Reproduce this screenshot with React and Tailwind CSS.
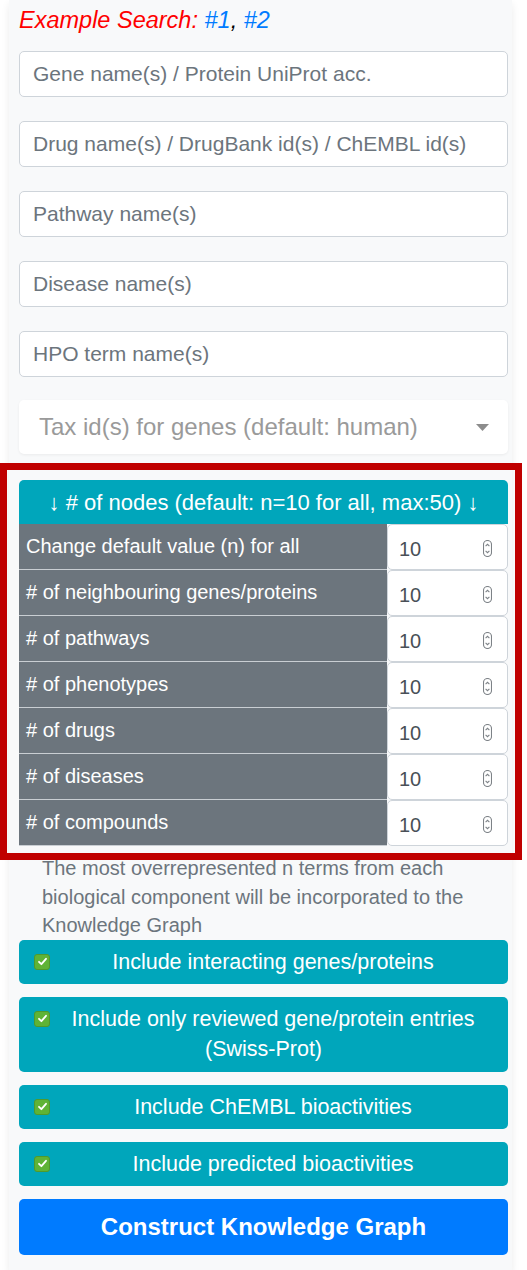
import React from "react";

const textInputs = [
  "Gene name(s) / Protein UniProt acc.",
  "Drug name(s) / DrugBank id(s) / ChEMBL id(s)",
  "Pathway name(s)",
  "Disease name(s)",
  "HPO term name(s)",
];

const nodeRows = [
  "Change default value (n) for all",
  "# of neighbouring genes/proteins",
  "# of pathways",
  "# of phenotypes",
  "# of drugs",
  "# of diseases",
  "# of compounds",
];

const options = [
  ["Include interacting genes/proteins"],
  ["Include only reviewed gene/protein entries", "(Swiss-Prot)"],
  ["Include ChEMBL bioactivities"],
  ["Include predicted bioactivities"],
];

function Spinner() {
  return (
    <svg width="9" height="17" viewBox="0 0 9 17" fill="none" stroke="#7d8287" strokeWidth="1.1">
      <rect x="0.5" y="0.5" width="8" height="16" rx="4" />
      <path d="M2.6 6.2 L4.5 4.3 L6.4 6.2" />
      <path d="M2.6 10.8 L4.5 12.7 L6.4 10.8" />
    </svg>
  );
}

function CheckBox() {
  return (
    <span className="float-left mt-[7px] ml-[3px] flex h-[16px] w-[16px] items-center justify-center rounded-[3px] border border-[#4f9a2c] bg-[#5fb336]">
      <svg width="11" height="11" viewBox="0 0 11 11" fill="none" stroke="white" strokeWidth="1.8" strokeLinecap="round" strokeLinejoin="round">
        <path d="M2 5.8 L4.4 8.2 L9 2.8" />
      </svg>
    </span>
  );
}

export default function App() {
  return (
    <div className="min-h-screen bg-white font-['Liberation_Sans',Arial,sans-serif]">
      <div className="ml-[9px] w-[503px] bg-[#f8f9fa] pl-[10px] pr-[4px] pt-[6px] pb-[16px] shadow-[0_4px_8px_rgba(0,0,0,0.08)]">
        <p className="text-[23.5px] leading-[28px] italic text-[#ff0000]">
          Example Search: <a className="text-[#007bff]">#1</a>
          <span className="text-black">,</span> <a className="text-[#007bff]">#2</a>
        </p>

        <div className="mt-[17px] flex flex-col gap-[24px]">
          {textInputs.map((p) => (
            <input
              key={p}
              placeholder={p}
              className="h-[46px] w-full rounded-[5px] border border-[#ced4da] bg-white px-[13px] text-[21px] text-[#495057] placeholder:text-[#6c757d] outline-none"
            />
          ))}
        </div>

        <div className="mt-[23px] flex h-[54px] items-center justify-between rounded-[5px] bg-white pl-[20px] pr-[19px] shadow-[0_1px_3px_rgba(0,0,0,0.06)]">
          <span className="text-[24px] text-[#9a9a9a]">Tax id(s) for genes (default: human)</span>
          <svg width="13" height="7" viewBox="0 0 13 7">
            <path d="M0 0 H13 L6.5 7 Z" fill="#8c8c8c" />
          </svg>
        </div>

        <div className="relative mt-[26px]">
          <div className="pointer-events-none absolute -top-[17px] -bottom-[14px] -left-[19px] -right-[14px] border-[7px] border-[#c00000]" />
          <div className="flex h-[44px] items-center justify-center rounded-t-[5px] bg-[#00a6bb] text-[22px] text-white">
            ↓ # of nodes (default: n=10 for all, max:50) ↓
          </div>
          {nodeRows.map((label) => (
            <div key={label} className="flex h-[46px]">
              <div className="flex w-[368px] items-center border-b border-[#c9ced3] bg-[#6c757d] pl-[7px] pb-[2px] text-[20px] text-white">
                {label}
              </div>
              <div className="flex flex-1 items-center justify-between rounded-[5px] border border-[#ced4da] bg-white pl-[11px] pr-[15px] pt-[3px]">
                <span className="text-[20px] text-[#495057]">10</span>
                <Spinner />
              </div>
            </div>
          ))}
        </div>

        <p className="mt-[8px] pl-[23px] pr-[26px] text-[20px] leading-[28.5px] text-[#6c757d]">
          The most overrepresented n terms from each biological component will be incorporated to the Knowledge Graph
        </p>

        <div className="flex flex-col gap-[13px]">
          {options.map((lines) => (
            <div
              key={lines[0]}
              className={
                lines.length > 1
                  ? "rounded-[5px] bg-[#00a6bb] px-[12px] pt-[7px] pb-[8px] text-center text-[21.5px] leading-[30px] text-white"
                  : "rounded-[5px] bg-[#00a6bb] px-[12px] py-[7px] text-center text-[21.5px] leading-[30px] text-white"
              }
            >
              <CheckBox />
              {lines.map((l, i) => (
                <React.Fragment key={l}>
                  {i > 0 && <br />}
                  {l}
                </React.Fragment>
              ))}
            </div>
          ))}
        </div>

        <button className="mt-[13px] flex h-[56px] w-full items-center justify-center rounded-[5px] bg-[#007bff] text-[24px] font-bold text-white">
          Construct Knowledge Graph
        </button>
      </div>
    </div>
  );
}
